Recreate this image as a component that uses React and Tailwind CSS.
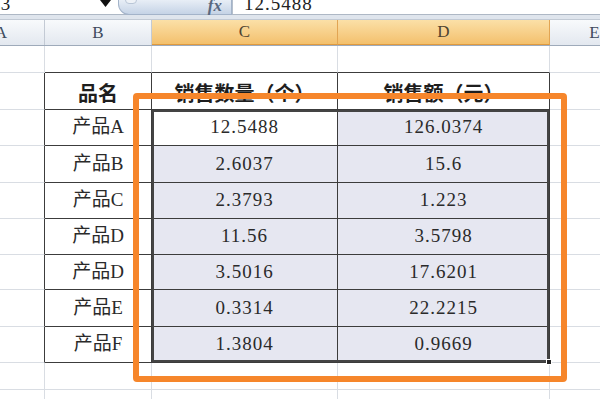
import React from 'react';

const cols = [
  { key: 'A', width: 'w-[87px]' },
  { key: 'B', width: 'w-[107px]' },
  { key: 'C', width: 'w-[186px]' },
  { key: 'D', width: 'w-[212px]' },
  { key: 'E', width: 'w-[90px]' },
];

const rowHeights = [
  'h-[27px]',
  'h-[37px]',
  'h-[36px]',
  'h-[37px]',
  'h-[36px]',
  'h-[36px]',
  'h-[35px]',
  'h-[37px]',
  'h-[36px]',
  'h-[27px]',
  'h-[30px]',
];

const data = [
  ['产品A', '12.5488', '126.0374'],
  ['产品B', '2.6037', '15.6'],
  ['产品C', '2.3793', '1.223'],
  ['产品D', '11.56', '3.5798'],
  ['产品D', '3.5016', '17.6201'],
  ['产品E', '0.3314', '22.2215'],
  ['产品F', '1.3804', '0.9669'],
];

function cellContent(r, c) {
  if (r === 1) {
    if (c === 1) return { text: '品名', bold: true };
    if (c === 2) return { text: '销售数量（个）', bold: true };
    if (c === 3) return { text: '销售额（元）', bold: true };
  }
  if (r >= 2 && r <= 8 && c >= 1 && c <= 3) {
    return { text: data[r - 2][c - 1], bold: false, num: c > 1 };
  }
  return null;
}

function Cell({ r, c }) {
  const inTable = r >= 1 && r <= 8;
  const rightDark = inTable && c <= 3;
  const bottomDark = (inTable || r === 0) && c >= 1 && c <= 3;
  const selected = r >= 2 && r <= 8 && c >= 2 && c <= 3;
  const active = r === 2 && c === 2;
  const content = cellContent(r, c);

  return (
    <div
      className={[
        cols[c].width,
        'h-full shrink-0 border-r border-b flex items-center justify-center',
        rightDark ? 'border-r-[#3c3c3c]' : 'border-r-[#d9dde3]',
        bottomDark ? 'border-b-[#3c3c3c]' : 'border-b-[#d9dde3]',
        selected && !active ? 'bg-[#e6e7f1]' : 'bg-white',
      ].join(' ')}
    >
      {content && (
        <span
          className={
            content.bold
              ? 'text-[20px] font-bold text-[#1e1e1e] pt-[5px]'
              : content.num
                ? 'text-[19px] tracking-[1px] text-[#2a2a2a]'
                : 'text-[19px] text-[#2a2a2a]'
          }
        >
          {content.text}
        </span>
      )}
    </div>
  );
}

function FormulaBar() {
  return (
    <div className="h-[15px] flex border-b border-[#aeb8c5] bg-white">
      <div className="w-[100px] overflow-hidden">
        <div className="-ml-[12px] -mt-[6px] text-[19px] leading-[19px] text-[#222]">C3</div>
      </div>
      <div className="w-[18px] relative">
        <svg className="absolute left-0 top-0" width="11" height="7" viewBox="0 0 11 7">
          <polygon points="0,0 11,0 5.5,7" fill="#111" />
        </svg>
      </div>
      <div className="w-[114px] h-[15px] relative rounded-bl-[11px] border border-t-0 border-[#a3b3c9] bg-linear-to-b from-[#e8eef6] to-[#c5d3e6] flex justify-end">
        <div className="absolute left-[6px] -top-[4px] w-[12px] h-[8px] rounded-full bg-[#eef2f7] border border-[#b9c6d7]" />
        <span className="pr-[9px] -mt-[3px] text-[17px] italic font-bold leading-[17px] text-[#5a6980]">fx</span>
      </div>
      <div className="flex-1 border-l border-[#b5bfcc] overflow-hidden">
        <div className="pl-[11px] -mt-[6px] text-[19px] leading-[19px] tracking-[1px] text-[#222]">12.5488</div>
      </div>
    </div>
  );
}

function ColumnHeaders() {
  return (
    <div className="h-[26px] flex border-b border-[#9eaaba]">
      {cols.map((col) => {
        const sel = col.key === 'C' || col.key === 'D';
        return (
          <div
            key={col.key}
            className={[
              col.width,
              'h-full shrink-0 border-r flex items-center justify-center text-[17px]',
              sel
                ? 'bg-linear-to-b from-[#fbe0a7] to-[#f3c06c] border-r-[#e2a553] text-[#4e4430] border-b border-b-[#e09a3e]'
                : 'bg-linear-to-b from-[#f8fafc] to-[#e3e8ef] border-r-[#c3cad4] text-[#3e4b5d]',
            ].join(' ')}
          >
            {col.key}
          </div>
        );
      })}
    </div>
  );
}

export default function App() {
  return (
    <div className="w-[600px] h-[399px] overflow-hidden relative bg-white font-['Liberation_Serif','Noto_Sans_CJK_SC',serif]">
      <FormulaBar />
      <div className="h-[5px] bg-[#dfe5ed] border-b border-[#c2cad5]" />
      <div className="-ml-[42px] w-[682px]">
        <ColumnHeaders />
        {rowHeights.map((h, r) => (
          <div key={r} className={`${h} flex`}>
            {cols.map((col, c) => (
              <Cell key={col.key} r={r} c={c} />
            ))}
          </div>
        ))}
      </div>

      {/* selection frame and fill handle */}
      <div className="absolute left-[152px] top-[110px] w-[397px] h-[252px] border-2 border-[#444]" />
      <div className="absolute left-[546px] top-[359px] w-[6px] h-[6px] bg-[#222] border border-white" />

      {/* orange annotation box */}
      <div className="absolute left-[133px] top-[93px] w-[434px] h-[289px] border-[6px] border-[#f6862b] rounded-[4px]" />
    </div>
  );
}
